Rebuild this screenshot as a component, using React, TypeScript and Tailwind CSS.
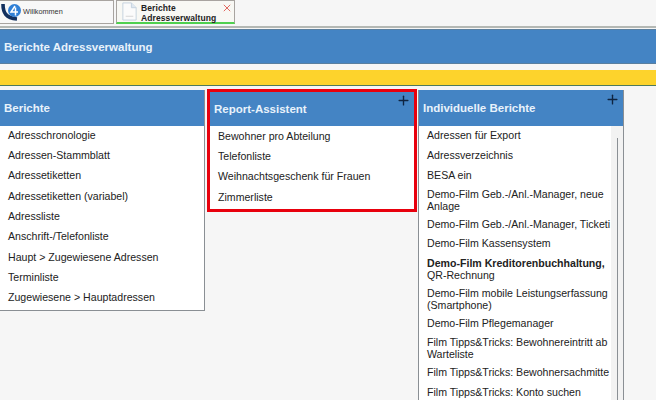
import React from 'react';
import { Plus } from 'lucide-react';

const berichte = [
  'Adresschronologie',
  'Adressen-Stammblatt',
  'Adressetiketten',
  'Adressetiketten (variabel)',
  'Adressliste',
  'Anschrift-/Telefonliste',
  'Haupt > Zugewiesene Adressen',
  'Terminliste',
  'Zugewiesene > Hauptadressen',
];

const assistent = ['Bewohner pro Abteilung', 'Telefonliste', 'Weihnachtsgeschenk für Frauen', 'Zimmerliste'];

const PanelHead = ({ title, className, plusClass }: { title: string; className: string; plusClass?: string }) => (
  <div className={`relative bg-[#4484c4] flex items-center text-[11.5px] font-bold text-[#e8f2fb] ${className}`}>
    {title}
    {plusClass && <Plus className={`absolute w-[15px] h-[15px] text-[#0f2440] ${plusClass}`} strokeWidth={2.2} />}
  </div>
);

const Row = ({ children, h = 'h-[20.3px]' }: { children: React.ReactNode; h?: string }) => (
  <div className={`${h} pb-[2px] flex items-center text-[10.6px] leading-[12.5px] text-[#222]`}>
    <div>{children}</div>
  </div>
);

export default function App() {
  return (
    <div className="w-[656px] h-[400px] overflow-hidden bg-[#f6f6f6] font-['Liberation_Sans',sans-serif]">
      {/* Tab bar */}
      <div className="h-[28px] flex items-start border-b-2 border-[#b4b8b4]">
        <div className="w-[114px] h-[24px] flex items-center bg-[#f8f8f8] border border-[#a8a4a0] border-l-0">
          <svg viewBox="0 0 22 18" className="w-[22px] h-[18px]">
            <path d="M3 1 C3 10 6 15 17 16" fill="none" stroke="#12305e" strokeWidth="3.6" />
            <circle cx="14.5" cy="7.5" r="6.5" fill="#2f7fd6" />
            <path d="M15 3 L11 9 H18 M15.5 4.5 V12.5" fill="none" stroke="#fff" strokeWidth="1.5" />
          </svg>
          <span className="ml-[1px] text-[7.3px] text-[#333]">Willkommen</span>
        </div>
        <div className="ml-[2px] w-[119px] h-[24px] flex bg-[#f8f8f4] border border-[#a8a4a0] border-b-2 border-b-[#4fd04f]">
          <svg viewBox="0 0 16 20" className="w-[17px] h-[19px] ml-[4px] mt-[1px]">
            <path d="M1 1 H10 L15 6 V19 H1 Z" fill="#fbfbfb" stroke="#c4d2de" />
            <path d="M10 1 V6 H15" fill="#dfe8f0" stroke="#c4d2de" />
            <path d="M4 15 H12" stroke="#d4d4d4" />
          </svg>
          <div className="ml-[3px] pt-[2px] text-[8.5px] leading-[10px] font-bold tracking-[0.1px] text-[#222]">
            Berichte
            <br />
            Adressverwaltung
          </div>
          <svg viewBox="0 0 10 10" className="ml-[7px] mt-[3px] w-[8px] h-[8px]">
            <path d="M1 1 L9 9 M9 1 L1 9" stroke="#e0625a" strokeWidth="1.2" />
          </svg>
        </div>
      </div>

      {/* Page title */}
      <div className="mt-[1px] h-[35px] bg-[#4484c4] border-y border-[#5a7f9f] flex items-center pl-[4px] pt-[2px] text-[11.5px] font-bold text-[#e8f2fb]">
        Berichte Adressverwaltung
      </div>
      <div className="mt-[6px] h-[16px] bg-[#fdd32c] border-b border-[#4e7a5c]" />

      {/* Panels */}
      <div className="mt-[4px] flex items-start">
        <div className="w-[205px] bg-white border-r border-b border-[#8a8f94]">
          <PanelHead title="Berichte" className="h-[36px] pl-[4px] pt-[2px]" />
          <div className="pl-[8px] pb-[1px]">
            {berichte.map(b => (
              <Row key={b}>{b}</Row>
            ))}
          </div>
        </div>

        <div className="ml-[2px] -mt-[1px] w-[210px] bg-white border-[3px] border-[#e8000d]">
          <PanelHead title="Report-Assistent" className="h-[34px] pl-[4px] pt-[1px]" plusClass="right-[3px] top-[1px]" />
          <div className="pl-[8px] py-[1px]">
            {assistent.map(a => (
              <Row key={a}>{a}</Row>
            ))}
          </div>
        </div>

        <div className="ml-[1px] w-[206px] h-[320px] bg-white border-x border-[#8a8f94]">
          <PanelHead title="Individuelle Berichte" className="h-[36px] pl-[4px] pt-[2px]" plusClass="right-[3px] top-[2px]" />
          <div className="flex h-[284px]">
            <div className="w-[192px] pl-[8px] overflow-hidden">
              <Row>Adressen für Export</Row>
              <Row>Adressverzeichnis</Row>
              <Row>BESA ein</Row>
              <Row h="h-[29px]">
                <span className="whitespace-nowrap">Demo-Film Geb.-/Anl.-Manager, neue</span>
                <br />
                Anlage
              </Row>
              <Row h="h-[18px]">
                <span className="whitespace-nowrap">Demo-Film Geb.-/Anl.-Manager, Ticketi</span>
              </Row>
              <Row h="h-[20px]">Demo-Film Kassensystem</Row>
              <Row h="h-[33px]">
                <b className="whitespace-nowrap">Demo-Film Kreditorenbuchhaltung,</b>
                <br />
                QR-Rechnung
              </Row>
              <Row h="h-[27px]">
                <span className="whitespace-nowrap">Demo-Film mobile Leistungserfassung</span>
                <br />
                (Smartphone)
              </Row>
              <Row h="h-[20px]">Demo-Film Pflegemanager</Row>
              <Row h="h-[31px]">
                <span className="whitespace-nowrap">Film Tipps&amp;Tricks: Bewohnereintritt ab</span>
                <br />
                Warteliste
              </Row>
              <Row h="h-[16px]">
                <span className="whitespace-nowrap">Film Tipps&amp;Tricks: Bewohnersachmitte</span>
              </Row>
              <Row h="h-[24px]">Film Tipps&amp;Tricks: Konto suchen</Row>
            </div>
            {/* scrollbar strip */}
            <div className="flex-1 bg-[#f2f2f2] pt-[12px] flex justify-center">
              <div className="w-[1px] h-full bg-[#8a8f94]" />
            </div>
          </div>
        </div>
      </div>
    </div>
  );
}
